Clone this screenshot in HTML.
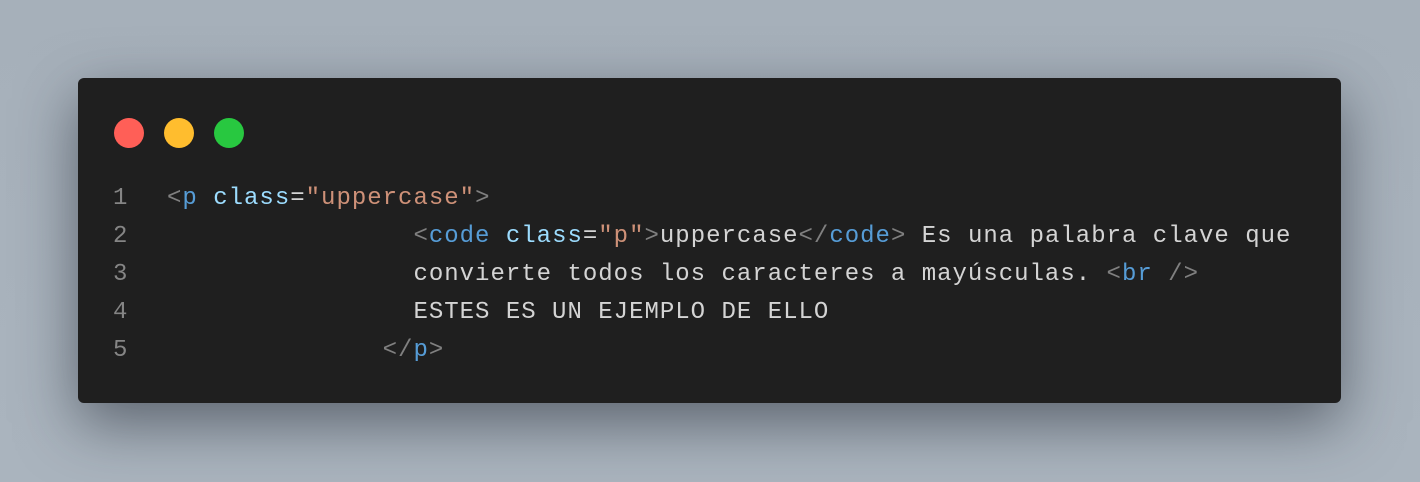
<!DOCTYPE html>
<html><head><meta charset="utf-8"><style>
html,body{margin:0;padding:0;}
body{width:1420px;height:482px;background:linear-gradient(180deg,#a6b0ba,#aab4be);position:relative;overflow:hidden;}
.card{position:absolute;left:78px;top:78px;width:1263px;height:325px;background:#1f1f1f;border-radius:6px;box-shadow:0 20px 60px rgba(30,35,45,0.55);}
.dot{position:absolute;top:40px;width:30px;height:30px;border-radius:50%;}
pre{position:absolute;left:0;top:102px;margin:0;font-family:"Liberation Mono",monospace;font-size:24px;letter-spacing:1px;line-height:38px;color:#d4d4d4;}
.ln{display:inline-block;width:89px;padding-left:35px;box-sizing:border-box;color:#858585;letter-spacing:0;}
.b{color:#808080}.t{color:#569cd6}.a{color:#9cdcfe}.s{color:#ce9178}
</style></head><body>
<div class="card">
<div class="dot" style="left:36px;background:#ff5f57"></div>
<div class="dot" style="left:86px;background:#ffbd2e"></div>
<div class="dot" style="left:136px;background:#28c840"></div>
<pre><span class="ln">1</span><span class="b">&lt;</span><span class="t">p</span> <span class="a">class</span>=<span class="s">"uppercase"</span><span class="b">&gt;</span>
<span class="ln">2</span>                <span class="b">&lt;</span><span class="t">code</span> <span class="a">class</span>=<span class="s">"p"</span><span class="b">&gt;</span>uppercase<span class="b">&lt;/</span><span class="t">code</span><span class="b">&gt;</span> Es una palabra clave que
<span class="ln">3</span>                convierte todos los caracteres a mayúsculas. <span class="b">&lt;</span><span class="t">br</span> <span class="b">/&gt;</span>
<span class="ln">4</span>                ESTES ES UN EJEMPLO DE ELLO
<span class="ln">5</span>              <span class="b">&lt;/</span><span class="t">p</span><span class="b">&gt;</span></pre>
</div>
</body></html>
